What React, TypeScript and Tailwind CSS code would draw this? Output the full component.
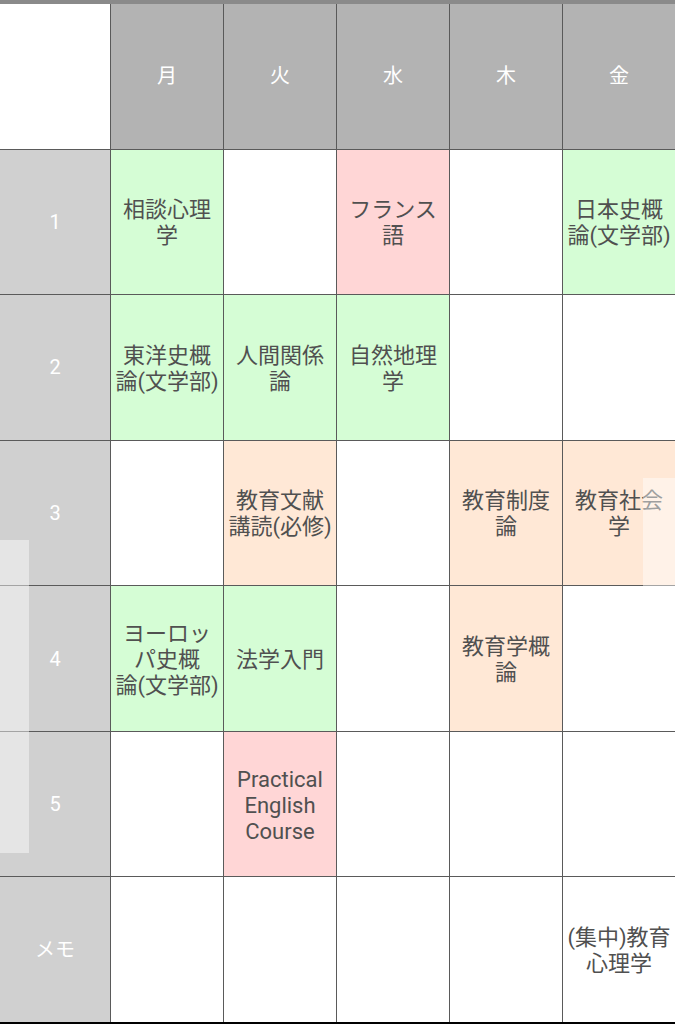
import React from 'react';

type Cell = { text?: React.ReactNode; color?: 'green' | 'pink' | 'orange' };

const days = ['月', '火', '水', '木', '金'];

const periods = ['1', '2', '3', '4', '5', 'メモ'];

// 「論(文学部)」は途中で改行させない
const Keep = ({ children }: { children: React.ReactNode }) => (
  <span className="whitespace-nowrap">{children}</span>
);

const timetable: Cell[][] = [
  [{ text: '相談心理学', color: 'green' }, {}, { text: 'フランス語', color: 'pink' }, {}, { text: <>日本史概<Keep>論(文学部)</Keep></>, color: 'green' }],
  [{ text: <>東洋史概<Keep>論(文学部)</Keep></>, color: 'green' }, { text: '人間関係論', color: 'green' }, { text: '自然地理学', color: 'green' }, {}, {}],
  [{}, { text: <>教育文献<Keep>講読(必修)</Keep></>, color: 'orange' }, {}, { text: '教育制度論', color: 'orange' }, { text: '教育社会学', color: 'orange' }],
  [{ text: <>ヨーロッパ史概<Keep>論(文学部)</Keep></>, color: 'green' }, { text: '法学入門', color: 'green' }, {}, { text: '教育学概論', color: 'orange' }, {}],
  [{}, { text: 'Practical English Course', color: 'pink' }, {}, {}, {}],
  [{}, {}, {}, {}, { text: '(集中)教育心理学' }]
];

const bgFor = (color?: Cell['color']) => {
  if (color === 'green') return 'bg-[#d5fdd5]';
  if (color === 'pink') return 'bg-[#ffd6d6]';
  if (color === 'orange') return 'bg-[#ffe8d6]';
  return 'bg-white';
};

const App: React.FC = () => {
  return (
    <div
      className="relative w-[675px] h-[1024px] flex flex-col bg-white overflow-hidden"
      style={{ fontFamily: 'Roboto, "Noto Sans CJK JP", sans-serif' }}
    >
      <div className="h-[4px] bg-[#8a8a8a]" />
      <div className="flex-1 grid grid-cols-[110px_repeat(5,112px)] grid-rows-[repeat(7,1fr)] gap-px bg-[#5a5a5a]">
        <div className="bg-white" />
        {days.map(day => (
          <div key={day} className="bg-[#b3b3b3] flex items-center justify-center text-white text-[20px]">
            {day}
          </div>
        ))}

        {periods.map((period, rowIdx) => (
          <React.Fragment key={period}>
            <div className="bg-[#d0d0d0] flex items-center justify-center text-white text-[20px]">
              {period}
            </div>
            {timetable[rowIdx].map((cell, colIdx) => (
              <div
                key={colIdx}
                className={`${bgFor(cell.color)} flex items-center justify-center px-1 pt-[3px] text-center text-[#505050] text-[22px] leading-[26px]`}
              >
                <div>{cell.text}</div>
              </div>
            ))}
          </React.Fragment>
        ))}
      </div>
      <div className="h-[2px] bg-black" />

      {/* scroll handles */}
      <div className="absolute left-0 top-[540px] w-[29px] h-[313px] bg-white/45" />
      <div className="absolute right-0 top-[478px] w-[32px] h-[127px] bg-white/45" />
    </div>
  );
};

export default App;
